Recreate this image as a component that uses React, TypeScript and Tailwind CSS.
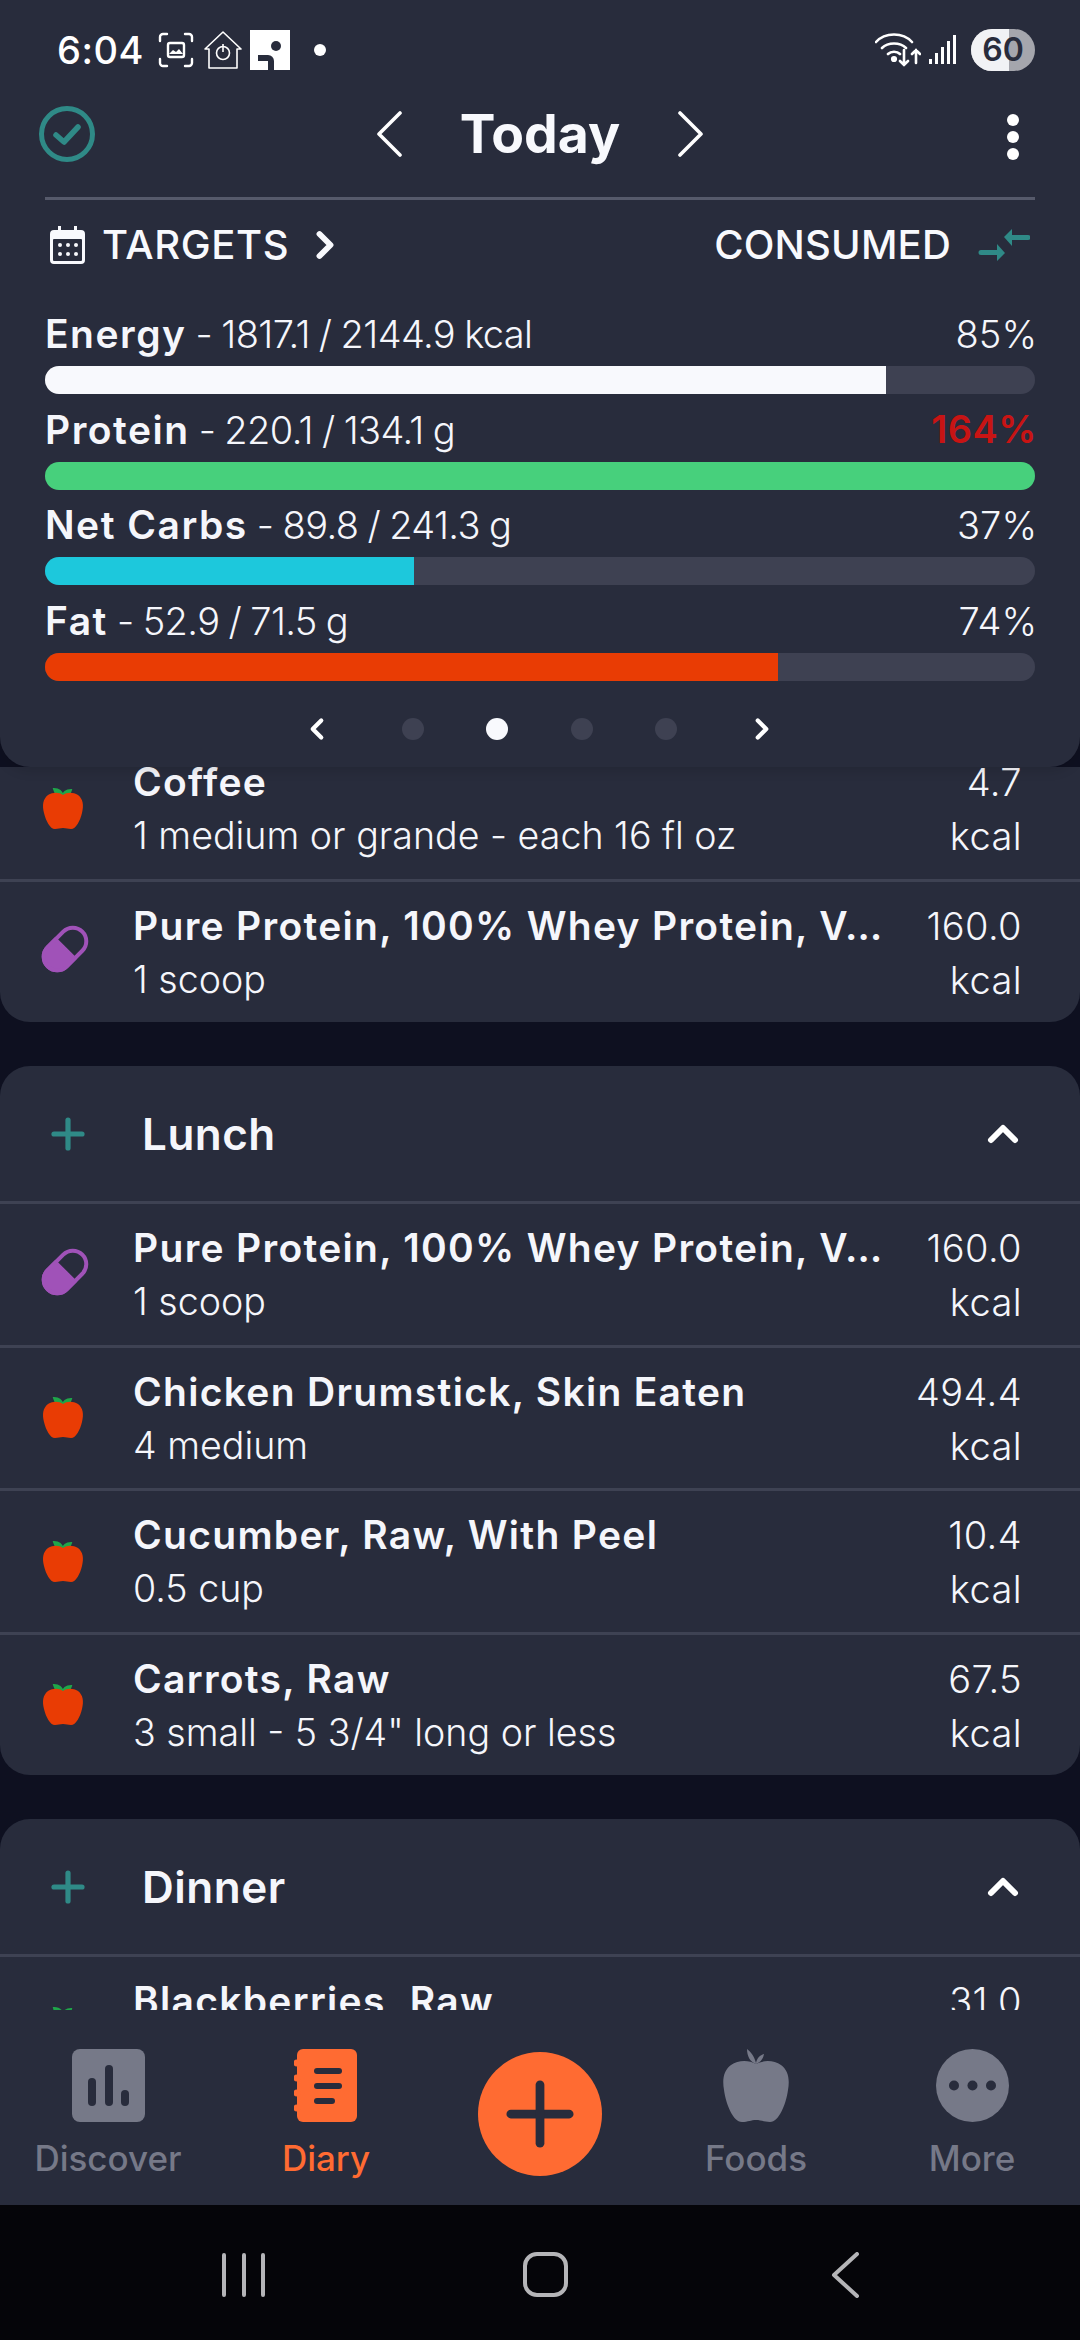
import React from 'react';
import { ChevronLeft, ChevronRight, ChevronUp, Plus } from 'lucide-react';

type Food = { name: string; amount: string; kcal: string; kind: 'apple' | 'pill' };

const macros = [
  { name: 'Energy', detail: '1817.1 / 2144.9 kcal', pct: '85%', over: false, width: '84.9%', color: 'bg-[#f8f9fd]' },
  { name: 'Protein', detail: '220.1 / 134.1 g', pct: '164%', over: true, width: '100%', color: 'bg-[#47d07c]' },
  { name: 'Net Carbs', detail: '89.8 / 241.3 g', pct: '37%', over: false, width: '37.3%', color: 'bg-[#1dc8dc]' },
  { name: 'Fat', detail: '52.9 / 71.5 g', pct: '74%', over: false, width: '74%', color: 'bg-[#e93c04]' },
];

const breakfast: Food[] = [
  { name: 'Coffee', amount: '1 medium or grande - each 16 fl oz', kcal: '4.7', kind: 'apple' },
  { name: 'Pure Protein, 100% Whey Protein, V…', amount: '1 scoop', kcal: '160.0', kind: 'pill' },
];

const lunch: Food[] = [
  { name: 'Pure Protein, 100% Whey Protein, V…', amount: '1 scoop', kcal: '160.0', kind: 'pill' },
  { name: 'Chicken Drumstick, Skin Eaten', amount: '4 medium', kcal: '494.4', kind: 'apple' },
  { name: 'Cucumber, Raw, With Peel', amount: '0.5 cup', kcal: '10.4', kind: 'apple' },
  { name: 'Carrots, Raw', amount: '3 small - 5 3/4" long or less', kcal: '67.5', kind: 'apple' },
];

const dinner: Food[] = [{ name: 'Blackberries, Raw', amount: '1 cup', kcal: '31.0', kind: 'apple' }];

const AppleIcon = () => (
  <svg width="44" height="50" viewBox="0 0 44 50">
    <path d="M22 15c-1-4-4-7-9-7 1 4 4 7 9 7zM22 15c0-3 3-6 8-6-1 4-4 6-8 6z" fill="#1fa64a" stroke="#1fa64a" strokeWidth="2" />
    <path d="M22 14c-4-3-10-3-15 0-5 4-6 10-4 18 2 8 6 16 11 16 3 0 5-1 8-1s5 1 8 1c5 0 9-8 11-16 2-8 1-14-4-18-5-3-11-3-15 0z" fill="#e93c04" />
  </svg>
);

const PillIcon = () => (
  <svg width="48" height="48" viewBox="0 0 48 48">
    <g transform="rotate(-45 24 24)">
      <rect x="-0.5" y="10.5" width="49" height="27" rx="13.5" fill="none" stroke="#a052b8" strokeWidth="4" />
      <path d="M24 10.5H13a13.5 13.5 0 0 0 0 27h11z" fill="#a052b8" stroke="#a052b8" strokeWidth="4" />
    </g>
  </svg>
);

const FoodRow = ({ food }: { food: Food }) => (
  <div className="flex h-[143.5px] border-t-[3px] border-[#3e4253]">
    <div className="w-[133px] shrink-0 flex items-center pl-[41px] pb-[5px]">
      {food.kind === 'apple' ? <AppleIcon /> : <PillIcon />}
    </div>
    <div className="flex-1 min-w-0 pt-[19px]">
      <div className="text-[39px] leading-[50px] font-semibold tracking-[1.3px] text-[#f5f6fb] whitespace-nowrap">{food.name}</div>
      <div className="text-[37.6px] leading-[50px] mt-[4px] font-light text-[#f5f6fb] whitespace-nowrap">{food.amount}</div>
    </div>
    <div className="pr-[58px] pt-[19px] text-right font-light text-[38px] tracking-[0.4px] leading-[50px] text-[#f5f6fb]">
      <div>{food.kcal}</div>
      <div className="mt-[4px]">kcal</div>
    </div>
  </div>
);

const MealHeader = ({ title }: { title: string }) => (
  <div className="flex items-center h-[135px] pl-[44px] pr-[53px]">
    <Plus size={48} strokeWidth={2.6} className="text-[#2f8a87]" />
    <span className="ml-[50px] flex-1 text-[44px] tracking-[0.5px] font-semibold text-[#f5f6fb]">{title}</span>
    <ChevronUp size={48} strokeWidth={3} className="text-white" />
  </div>
);

const StatusBar = () => (
  <div className="flex items-center h-[100px] pl-[57px] pr-[45px] text-white">
    <span className="text-[38px] font-medium tracking-[0.5px]">6:04</span>
    <svg className="ml-[14px]" width="36" height="36" viewBox="0 0 36 36" fill="none" stroke="#fff" strokeWidth="2.4" strokeLinecap="round">
      <path d="M2 9V5a3 3 0 0 1 3-3h4M27 2h4a3 3 0 0 1 3 3v4M34 27v4a3 3 0 0 1-3 3h-4M9 34H5a3 3 0 0 1-3-3v-4" />
      <rect x="10" y="11" width="16" height="14" rx="2" />
      <path d="M11 22l4-4 3 2 3-3 4 5z" fill="#fff" stroke="none" />
    </svg>
    <svg className="ml-[10px]" width="38" height="38" viewBox="0 0 38 38" fill="none" stroke="#fff" strokeWidth="1.6">
      <path d="M1 18L19 1l18 17h-4v19H5V18z" strokeLinejoin="round" />
      <circle cx="19" cy="22" r="6.5" />
      <path d="M19 13v8" />
    </svg>
    <svg className="ml-[8px]" width="40" height="40" viewBox="0 0 40 40">
      <rect width="40" height="40" fill="#fff" />
      <circle cx="26" cy="16" r="5" fill="#282c3c" />
      <path d="M8 25h10a6 6 0 0 1 6 6v9h-6V31H8z" fill="#282c3c" />
    </svg>
    <span className="ml-[24px] w-[12px] h-[12px] rounded-full bg-white" />
    <span className="flex-1" />
    <svg width="46" height="36" viewBox="0 0 46 36" fill="none" stroke="#fff" strokeWidth="2.6" strokeLinecap="round">
      <path d="M1 10C10 0 28 0 37 10M7 16c6-6 18-6 24 0M13 22c3-3 9-3 12 0" />
      <circle cx="19" cy="27" r="1.8" fill="#fff" />
      <path d="M29 18v15M25 29l4 4 4-4M41 31V18M37 22l4-4 4 4" />
    </svg>
    <svg className="ml-[8px]" width="28" height="30" viewBox="0 0 28 30" fill="#fff">
      <rect x="0" y="24" width="3" height="5" />
      <rect x="6" y="18" width="3" height="11" />
      <rect x="12" y="12" width="3" height="17" />
      <rect x="18" y="6" width="3" height="23" />
      <rect x="24" y="0" width="3" height="29" />
    </svg>
    <div className="ml-[14px] relative w-[64px] h-[42px] rounded-full overflow-hidden bg-[#a5a6ad] flex">
      <div className="w-[38px] bg-[#f1f2f5]" />
      <span className="absolute inset-0 flex items-center justify-center text-[32px] font-semibold text-[#282c3c]">60</span>
    </div>
  </div>
);

const TargetsPanel = () => (
  <div className="relative z-10 h-[767px] bg-[#282c3c] rounded-b-[30px] shadow-[0_4px_12px_rgba(0,0,0,0.12)]">
    <StatusBar />
    <div className="relative flex items-center justify-center h-[68px]">
      <svg className="absolute left-[38px]" width="58" height="58" viewBox="0 0 58 58" fill="none" stroke="#2f8a87">
        <circle cx="29" cy="29" r="25.5" strokeWidth="5" />
        <path d="M18 30l8 7 14-15" strokeWidth="5.5" strokeLinecap="round" strokeLinejoin="round" />
      </svg>
      <svg width="26" height="46" viewBox="0 0 26 46" fill="none" stroke="#fff" strokeWidth="3.6" strokeLinecap="round" strokeLinejoin="round">
        <path d="M24 2L3 23l21 21" />
      </svg>
      <span className="mx-[58px] text-[53.5px] font-bold leading-none text-[#f8f9fd]">Today</span>
      <svg width="26" height="46" viewBox="0 0 26 46" fill="none" stroke="#fff" strokeWidth="3.6" strokeLinecap="round" strokeLinejoin="round">
        <path d="M2 2l21 21L2 44" />
      </svg>
      <div className="absolute left-[1007px] top-[14px] flex flex-col gap-[5px]">
        <span className="w-[12px] h-[12px] rounded-full bg-white" />
        <span className="w-[12px] h-[12px] rounded-full bg-white" />
        <span className="w-[12px] h-[12px] rounded-full bg-white" />
      </div>
    </div>
    <div className="mx-[45px] mt-[29px] h-[3px] bg-[#565a6b]" />
    <div className="flex items-center h-[90px] mx-[45px] text-[#f8f9fd]">
      <svg className="ml-[5px]" width="35" height="38" viewBox="0 0 35 38">
        <path d="M8 0h3v4h13V0h3v4h4a4 4 0 0 1 4 4v26a4 4 0 0 1-4 4H4a4 4 0 0 1-4-4V8a4 4 0 0 1 4-4h4z" fill="#f8f9fd" />
        <rect x="3" y="13" width="29" height="22" rx="1" fill="#282c3c" />
        <g fill="#f8f9fd">
          <circle cx="10" cy="19" r="2" /><circle cx="18" cy="19" r="2" /><circle cx="26" cy="19" r="2" />
          <circle cx="10" cy="28" r="2" /><circle cx="18" cy="28" r="2" /><circle cx="26" cy="28" r="2" />
        </g>
      </svg>
      <span className="ml-[17px] text-[40px] font-medium tracking-[0.6px]">TARGETS</span>
      <ChevronRight size={44} strokeWidth={3.2} className="ml-[14px]" />
      <span className="flex-1" />
      <span className="text-[40px] font-medium tracking-[0.2px]">CONSUMED</span>
      <svg className="ml-[27px] mr-[5px]" width="52" height="34" viewBox="0 0 52 34" fill="#2f8a87">
        <path d="M26 9l8-8v6h16a2.5 2.5 0 0 1 0 5H34v6z" />
        <path d="M27 25l-8 8v-6H3a2.5 2.5 0 0 1 0-5h16v-6z" />
      </svg>
    </div>
    <div className="mx-[45px] mt-[20px] flex flex-col">
      {macros.map((m) => (
        <div key={m.name} className="h-[95.7px]">
          <div className="flex items-center justify-between h-[47px] text-[38px] leading-none text-[#f5f6fb]">
            <span className="whitespace-nowrap">
              <span className="font-semibold text-[39px] tracking-[1.5px]">{m.name}</span>
              <span className="font-light tracking-[-0.6px] [word-spacing:-1px]"> - {m.detail}</span>
            </span>
            <span className={m.over ? '-mr-[2px] font-semibold tracking-[0.5px] text-[#c81414]' : '-mr-[2px] font-light'}>{m.pct}</span>
          </div>
          <div className="mt-[9px] h-[28px] rounded-full bg-[#3e4152] overflow-hidden">
            <div className={`h-full ${m.color}`} style={{ width: m.width }} />
          </div>
        </div>
      ))}
    </div>
    <div className="relative h-[40px] mt-[16px]">
      <ChevronLeft size={34} strokeWidth={3} className="absolute left-[300px] top-[3px] text-white" />
      <span className="absolute left-[402px] top-[9px] w-[22px] h-[22px] rounded-full bg-[#3e4152]" />
      <span className="absolute left-[486px] top-[9px] w-[22px] h-[22px] rounded-full bg-[#f8f9fd]" />
      <span className="absolute left-[571px] top-[9px] w-[22px] h-[22px] rounded-full bg-[#3e4152]" />
      <span className="absolute left-[655px] top-[9px] w-[22px] h-[22px] rounded-full bg-[#3e4152]" />
      <ChevronRight size={34} strokeWidth={3} className="absolute left-[745px] top-[3px] text-white" />
    </div>
  </div>
);

const DiaryList = () => (
  <div className="flex-1 min-h-0 overflow-hidden bg-[#0e1020]">
    {/* list is scrolled, first rows sit under the targets panel */}
    <div className="-mt-[32px] flex flex-col gap-[44px]">
      <div className="bg-[#282c3c] rounded-b-[30px]">
        {breakfast.map((f) => <FoodRow key={f.name} food={f} />)}
      </div>
      <div className="bg-[#282c3c] rounded-[30px]">
        <MealHeader title="Lunch" />
        {lunch.map((f) => <FoodRow key={f.name} food={f} />)}
      </div>
      <div className="bg-[#282c3c] rounded-[30px]">
        <MealHeader title="Dinner" />
        {dinner.map((f) => <FoodRow key={f.name} food={f} />)}
      </div>
    </div>
  </div>
);

const BottomNav = () => (
  <div className="grid grid-cols-5 h-[195px] bg-[#282c3c] text-[#767988] text-[35px] font-medium">
    <div className="flex flex-col items-center pt-[39px]">
      <svg width="73" height="73" viewBox="0 0 73 73">
        <rect width="73" height="73" rx="8" fill="#767988" />
        <rect x="16" y="29" width="8" height="28" rx="4" fill="#282c3c" />
        <rect x="33" y="16" width="8" height="41" rx="4" fill="#282c3c" />
        <rect x="49" y="41" width="8" height="16" rx="4" fill="#282c3c" />
      </svg>
      <span className="mt-[10px] leading-[52px]">Discover</span>
    </div>
    <div className="flex flex-col items-center pt-[39px] pl-[4px] text-[#ff6b32]">
      <svg width="64" height="73" viewBox="0 0 64 73">
        <rect x="3" y="0" width="60" height="73" rx="6" fill="#ff6b32" />
        <circle cx="3" cy="14" r="3.5" fill="#ff6b32" /><circle cx="3" cy="29" r="3.5" fill="#ff6b32" />
        <circle cx="3" cy="44" r="3.5" fill="#ff6b32" /><circle cx="3" cy="59" r="3.5" fill="#ff6b32" />
        <rect x="20" y="19" width="28" height="6" rx="3" fill="#282c3c" />
        <rect x="20" y="34" width="28" height="6" rx="3" fill="#282c3c" />
        <rect x="20" y="49" width="21" height="6" rx="3" fill="#282c3c" />
      </svg>
      <span className="mt-[10px] leading-[52px]">Diary</span>
    </div>
    <div className="flex justify-center pt-[42px]">
      <div className="w-[124px] h-[124px] rounded-full bg-[#ff6b32] flex items-center justify-center">
        <Plus size={100} strokeWidth={2.1} className="text-[#282c3c]" />
      </div>
    </div>
    <div className="flex flex-col items-center pt-[39px]">
      <svg width="66" height="73" viewBox="0 0 66 73" fill="#767988">
        <path d="M33 14C31 7 28 3 24 0c0 7 3 13 9 15 3-1 7-4 8-10-4 1-7 4-8 9z" />
        <path d="M33 15c-7-4-18-4-25 1C1 21-1 30 1 41c2 14 9 32 18 32 6 0 9-2 14-2s8 2 14 2c9 0 16-18 18-32 2-11 0-20-7-25-7-5-18-5-25-1z" />
      </svg>
      <span className="mt-[10px] leading-[52px]">Foods</span>
    </div>
    <div className="flex flex-col items-center pt-[39px]">
      <svg width="73" height="73" viewBox="0 0 73 73">
        <circle cx="36.5" cy="36.5" r="36.5" fill="#767988" />
        <circle cx="18" cy="36.5" r="5" fill="#282c3c" />
        <circle cx="36.5" cy="36.5" r="5" fill="#282c3c" />
        <circle cx="55" cy="36.5" r="5" fill="#282c3c" />
      </svg>
      <span className="mt-[10px] leading-[52px]">More</span>
    </div>
  </div>
);

const SystemNav = () => (
  <div className="h-[135px] bg-[#050509] flex items-start justify-center pt-[47px]">
    <svg width="640" height="46" viewBox="0 0 640 46" fill="none" stroke="#b5b5b8" strokeWidth="4" strokeLinecap="round" strokeLinejoin="round">
      <path d="M4 3v40M24 3v40M43 3v40" />
      <rect x="305" y="2" width="41" height="41" rx="12" />
      <path d="M637 2L614 23l23 21" />
    </svg>
  </div>
);

export default function App() {
  return (
    <div className="w-[1080px] h-[2340px] flex flex-col overflow-hidden bg-[#0e1020] font-['Inter',sans-serif]">
      <TargetsPanel />
      <DiaryList />
      <BottomNav />
      <SystemNav />
    </div>
  );
}
